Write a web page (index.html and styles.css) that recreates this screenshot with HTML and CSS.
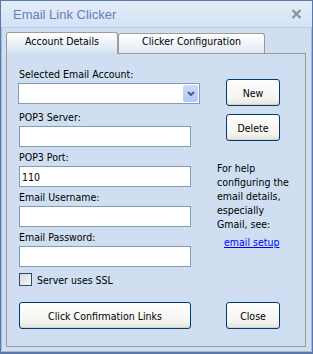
FILE: index.html
```html
<!DOCTYPE html>
<html lang="en">
<head>
    <link rel="stylesheet" href="styles.css">
</head>
<body>
<div class="window">
    <div class="titlebar">
        <span class="title">Email Link Clicker</span>
        <svg class="close" width="11" height="10" viewBox="0 0 11 10">
            <path d="M1.5 1 L9.5 9 M9.5 1 L1.5 9" stroke="#8c939d" stroke-width="2.4" fill="none"/>
        </svg>
    </div>
    <div class="tabs">
        <div class="tab tab-active">Account Details</div>
        <div class="tab tab-config">Clicker Configuration</div>
    </div>
    <div class="panel">
        <div class="main">
            <div class="form">
                <div class="label label-first">Selected Email Account:</div>
                <div class="select">
                    <span class="select-arrow">
                        <svg width="8" height="5" viewBox="0 0 8 5">
                            <path d="M1 1 L4 4 L7 1" stroke="#4d5f84" stroke-width="2" fill="none"/>
                        </svg>
                    </span>
                </div>
                <div class="label label-after-select">POP3 Server:</div>
                <input class="field" type="text">
                <div class="label">POP3 Port:</div>
                <input class="field" type="text" value="110">
                <div class="label">Email Username:</div>
                <input class="field" type="text">
                <div class="label">Email Password:</div>
                <input class="field" type="password">
                <div class="check-row">
                    <span class="checkbox"></span>
                    <span>Server uses SSL</span>
                </div>
            </div>
            <div class="side">
                <button class="btn btn-small btn-new">New</button>
                <button class="btn btn-small btn-delete">Delete</button>
                <div class="help">For help<br>configuring the<br>email details,<br>especially<br>Gmail, see:</div>
                <a class="help-link" href="#">email setup</a>
            </div>
        </div>
        <div class="actions">
            <button class="btn btn-wide">Click Confirmation Links</button>
            <button class="btn btn-small btn-close">Close</button>
        </div>
    </div>
</div>
</body>
</html>
```
FILE: styles.css
```css
body {
    margin: 0;
    padding: 0;
    font-family: Tahoma, "DejaVu Sans Condensed", "Liberation Sans", sans-serif;
    font-size: 10.5px;
    color: #000;
}
.window {
    width: 313px;
    height: 354px;
    box-sizing: border-box;
    border: 1px solid #5a79a8;
    border-bottom-width: 2px;
    background-color: #cfdef0;
    box-shadow: inset 1px 0 0 #9fbbe0, inset -1px 0 0 #9fbbe0, inset 0 -1px 0 #9fbbe0;
}
.titlebar {
    height: 26px;
    display: flex;
    align-items: center;
    justify-content: space-between;
    padding: 0 10px 0 12px;
    background: linear-gradient(#e4edf9, #d4e2f4);
    border-bottom: 1px solid #b9cde8;
}
.title {
    font-family: "Liberation Sans", sans-serif;
    font-size: 13px;
    color: #6a7dba;
}
.tabs {
    display: flex;
    align-items: flex-end;
    padding: 4px 0 0 5px;
}
.tab {
    box-sizing: border-box;
    border: 1px solid #9d9c92;
    border-bottom: none;
    border-radius: 3px 3px 0 0;
    text-align: center;
}
.tab-active {
    width: 112px;
    height: 22px;
    line-height: 16px;
    margin-bottom: -1px;
    position: relative;
    background: linear-gradient(#ffffff, #dde7f4 85%, #cfdef0);
}
.tab-config {
    width: 147px;
    height: 20px;
    line-height: 14px;
    background: linear-gradient(#ffffff, #e2e9f4);
}
.panel {
    margin: 0 6px 0 5px;
    border: 1px solid #9d9c92;
    padding: 14px 0 17px 12px;
}
.main {
    display: flex;
    gap: 18px;
}
.form {
    width: 180px;
}
.label {
    line-height: 13px;
    margin: 4px 0 2px;
}
.label-first {
    margin-top: 0;
}
.label-after-select {
    margin-top: 7px;
}
.select {
    width: 182px;
    height: 21px;
    margin-left: -1px;
    box-sizing: border-box;
    border: 1px solid #7f9db9;
    background: #fff;
    display: flex;
    justify-content: flex-end;
    padding: 1px;
}
.select-arrow {
    width: 15px;
    height: 17px;
    border-radius: 2px;
    background: linear-gradient(#cbdafc, #b4c8f5);
    display: flex;
    align-items: center;
    justify-content: center;
}
.field {
    display: block;
    width: 172px;
    height: 21px;
    box-sizing: border-box;
    margin: 0;
    border: 1px solid #7f9db9;
    padding: 0 2px;
    font: inherit;
    background: #fff;
    outline: none;
}
.check-row {
    display: flex;
    align-items: center;
    gap: 5px;
    margin-top: 6px;
    height: 13px;
}
.checkbox {
    width: 13px;
    height: 13px;
    box-sizing: border-box;
    border: 1px solid #1f4d78;
    background: linear-gradient(135deg, #d9d8d1, #f8f8f6);
}
.side {
    display: flex;
    flex-direction: column;
    align-items: flex-start;
}
.btn {
    height: 27px;
    box-sizing: border-box;
    margin: 0;
    padding: 0;
    border: 1px solid #003c74;
    border-radius: 3px;
    background: linear-gradient(#fefefe, #f4f4f0 75%, #e4e2da);
    box-shadow: inset 0 -1px 0 #d8d3c8;
    font: inherit;
    color: #000;
}
.btn-small {
    width: 54px;
}
.btn-new {
    margin: 11px 0 0 9px;
}
.btn-delete {
    margin: 8px 0 0 9px;
}
.help {
    margin-top: 20px;
    line-height: 14px;
}
.help-link {
    margin: 4px 0 0 7px;
    line-height: 14px;
    color: #0000ff;
}
.actions {
    display: flex;
    gap: 35px;
    margin-top: 16px;
}
.btn-wide {
    width: 172px;
}
```
